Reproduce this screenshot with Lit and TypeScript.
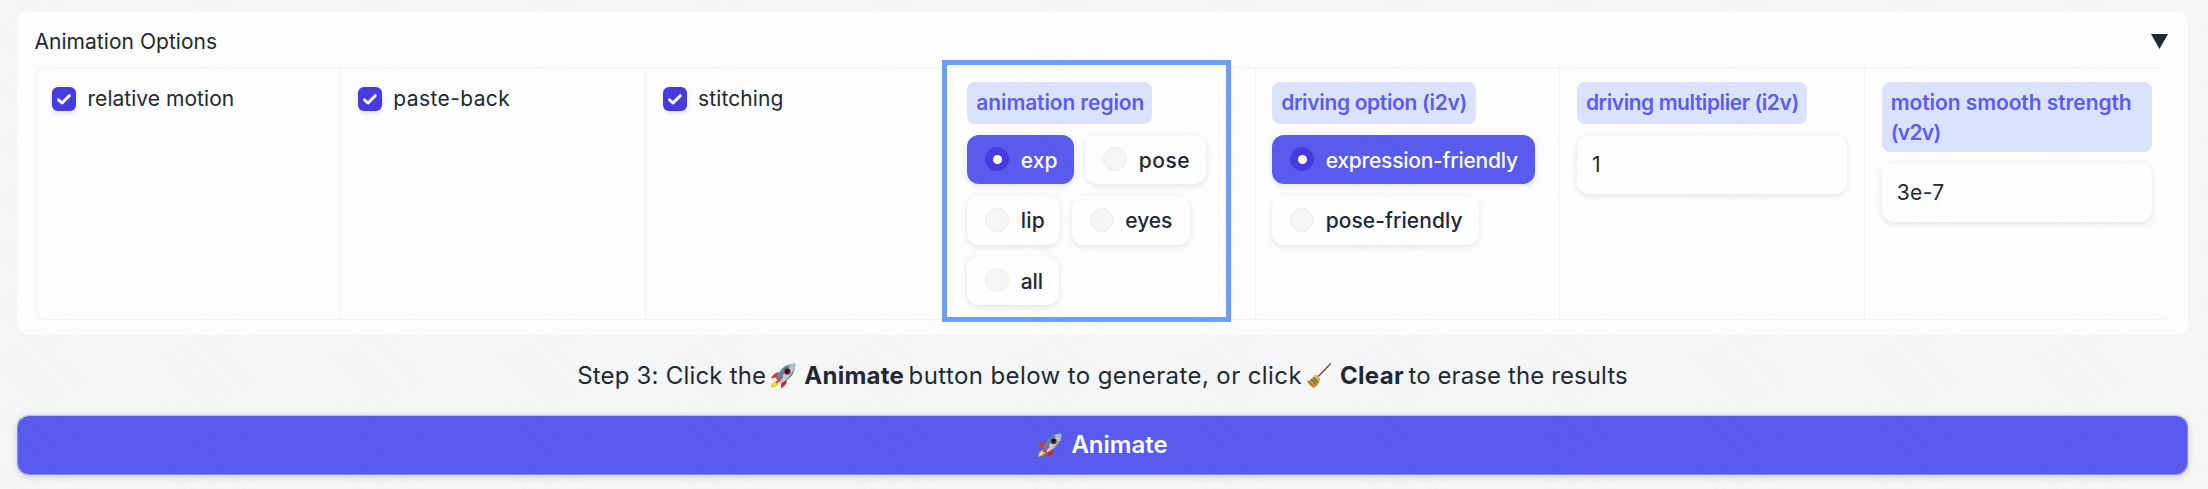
import { LitElement, html, svg, css } from 'lit';
import { customElement } from 'lit/decorators.js';
import { styleMap } from 'lit/directives/style-map.js';

type Run = { text: string; ls: number };
type Option = Run & { width: number; on?: boolean };

const CHECKS: Run[] = [
  { text: 'relative motion', ls: 0.04 },
  { text: 'paste-back', ls: 0.4 },
  { text: 'stitching', ls: 0.1 },
];

const REGION: Option[] = [
  { text: 'exp', ls: 0.05, width: 106.5, on: true },
  { text: 'pose', ls: 0.5, width: 121 },
  { text: 'lip', ls: 0.1, width: 93 },
  { text: 'eyes', ls: -0.1, width: 118 },
  { text: 'all', ls: -0.2, width: 91.5 },
];

const DRIVING: Option[] = [
  { text: 'expression-friendly', ls: -0.24, width: 263, on: true },
  { text: 'pose-friendly', ls: 0.06, width: 206.5 },
];

const run = (r: Run) =>
  html`<span class="run" style=${styleMap({ letterSpacing: `${r.ls}px` })}>${r.text}</span>`;

const rocket = (cls: string) => html`<svg class=${cls} viewBox="0 0 26 26" aria-hidden="true">
  <path d="M5.5 17.5 2.2 20.2 .8 24.8 5.4 23.6 9 20.8z" fill="#f7b718" />
  <path d="M5.5 18.3 3.4 21.2 2.6 23.3 5 22.2 8 19.8z" fill="#ffee58" />
  <path d="M9.6 9.2C5.7 8.8 2.9 11.2 .8 15.6l6-1.2z" fill="#e8361f" />
  <path d="M16.7 16.3c.4 3.9-1.6 6.7-5.9 9.2l.7-6.2z" fill="#d3231a" />
  <path d="M25.2 .8c-6.5-.3-12.1 2.5-15.3 7.6L5.7 15.6l4.8 4.8 7.1-4.2c5-3.3 7.9-9 7.6-15.4z" fill="#4d87b5" />
  <path d="M25.2 .8c-5.3 1.8-10.8 6.4-15.5 18.8l.8.8 7.1-4.2c5-3.3 7.9-9 7.6-15.4z" fill="#bdcbd6" />
  <path d="M25.2 .8c-1 6-3.7 10.7-10.3 17l2.7-1.6c5-3.3 7.9-9 7.6-15.4z" fill="#6e8294" />
  <path d="M25.2 .8c-3-.2-5.6.3-8 1.3 2.4 1 5.200 3.700 6.700 6.800 1-2.500 1.500-5.200 1.300-8.100z" fill="#a9bfd0" />
  <circle cx="17.300" cy="8.400" r="3.300" fill="#8d3630" />
  <circle cx="17.300" cy="8.400" r="2.200" fill="#16161d" />
  <path d="M11.700 12.900 5.400 19.300l1.300 1.300 6.700-6.200z" fill="#e9442a" />
</svg>`;

const broom = html`<svg class="emoji" viewBox="0 0 26 26" aria-hidden="true">
  <path d="M24.300 .9 12.200 13.500" stroke="#765246" stroke-width="1.500" stroke-linecap="round" />
  <path d="M9.100 11.700 13.900 16.200C13.500 20 11.300 23.300 7.600 25 4.500 23.200 2.300 20.900 1 17.700c4-.4 6.500-2.300 8.100-6z" fill="#c49a43" />
  <path d="M9.100 11.700c1.700-.4 4.800 2.300 4.800 4.500l-1 .8-4.500-4.100z" fill="#dcb75d" />
  <path d="M6.700 14.500 11.600 19.300M4.900 16.200 10.200 21.600" stroke="#7b5a29" stroke-width="1.100" />
  <path d="M3.200 18.300 8.100 23.600M2 18.100 6.500 23.500" stroke="#94702f" stroke-width=".7" />
</svg>`;

@customElement('app-root')
export class AppRoot extends LitElement {
  static styles = css`
    :host {
      display: block;
      position: relative;
      height: 489px;
      overflow: hidden;
      box-sizing: border-box;
      padding: 12px 20px 0 17px;
      background: #f5f6f8;
      color: #1f2933;
      font: 400 21px/30px Inter, 'Liberation Sans', sans-serif;
    }
    * { box-sizing: border-box; }
    .run { white-space: nowrap; }
    .panel {
      height: 322.5px;
      padding: 0 18px 0 17.5px;
      border-radius: 12px;
      background: #fdfdfd;
    }
    .head {
      display: flex;
      justify-content: space-between;
      padding: 15px 2px 10px 0;
      height: 55px;
    }
    .arrow { width: 17px; height: 15px; margin-top: 7px; fill: #1f2933; }
    .row {
      display: grid;
      grid-template-columns: repeat(7, 1fr);
      height: 252.5px;
      border: 1px solid #f2f3f4;
      border-right-color: transparent;
      border-radius: 12px;
    }
    .cell { padding: 14px 17px 0 16.5px; border-left: 1px solid #f2f3f4; }
    .cell.first { border-left: 0; }
    .check { display: flex; align-items: center; gap: 11.5px; padding-top: 2px; }
    .box {
      width: 24px;
      height: 24px;
      margin-top: -1px;
      border-radius: 6px;
      background: #463bdf;
      box-shadow: 0 2px 4px rgba(0, 0, 0, .12);
    }
    .label {
      display: inline-block;
      height: 42px;
      padding: 6px 9px;
      border-radius: 8px;
      background: #dbe2fe;
      color: #5b5cf0;
      font-weight: 600;
      vertical-align: top;
    }
    .label.tall { display: block; height: 70px; }
    .options { display: flex; flex-wrap: wrap; gap: 11.500px; margin-top: 11px; }
    .option {
      display: flex;
      align-items: center;
      gap: 11.5px;
      height: 49px;
      padding-left: 18px;
      border-radius: 12px;
      background: #fefefe;
      box-shadow: 0 2px 6px rgba(0, 0, 0, .1);
      font-weight: 450;
    }
    .option .run { padding-top: 2px; }
    .option.on { background: #595bed; color: #fff; }
    .dot {
      display: grid;
      place-items: center;
      width: 24px;
      height: 24px;
      margin-top: -1px;
      border: 1px solid #ebedf0;
      border-radius: 50%;
      background: #f5f6f8;
    }
    .on .dot { border-color: #463bdf; background: #463bdf; }
    .on .dot::after { content: ''; width: 9px; height: 9px; border-radius: 50%; background: #fff; }
    .field {
      height: 58.500px;
      margin-top: 11px;
      padding: 15px 15px 13px;
      border-radius: 12px;
      background: #fefefe;
      box-shadow: 0 2px 6px rgba(0, 0, 0, .1);
    }
    .frame {
      position: absolute;
      left: 942px;
      top: 60px;
      width: 289px;
      height: 262px;
      border: 5px solid #6b9fff;
    }
    .step {
      display: flex;
      justify-content: center;
      align-items: center;
      height: 36px;
      margin-top: 23.500px;
      font-size: 24px;
    }
    .step b { font-weight: 700; }
    .emoji { width: 26px; height: 26px; margin: 0 8px 0 4px; fill: none; }
    .gap { margin-left: 4.500px; }
    .button {
      display: flex;
      justify-content: center;
      align-items: center;
      height: 60px;
      margin-top: 21px;
      border: 1px solid #8587f2;
      border-top-color: #b9bbf4;
      border-radius: 12px;
      background: #595bed;
      background-clip: padding-box;
      box-shadow: 0 2px 7px rgba(0, 0, 0, .15);
      color: #fff;
      font-size: 24px;
      font-weight: 600;
    }
    .lead { width: 25px; height: 25px; margin: 0 9px 0 0; }
    .mark { position: absolute; inset: 0; width: 100%; height: 100%; pointer-events: none; }
    .mark text { font: 12px Inter, sans-serif; letter-spacing: .3px; fill: #000; fill-opacity: .01; }
  `;

  private options(items: Option[]) {
    return html`<div class="options">${items.map(
      (o) => html`<div class="option ${o.on ? 'on' : ''}" style=${styleMap({ width: `${o.width}px` })}>
        <span class="dot"></span>${run(o)}
      </div>`,
    )}</div>`;
  }

  private label(r: Run, width: number) {
    return html`<div class="label" style=${styleMap({ width: `${width}px` })}>${run(r)}</div>`;
  }

  render() {
    return html`
      <section class="panel">
        <div class="head">
          ${run({ text: 'Animation Options', ls: 0.04 })}
          <svg class="arrow" viewBox="0 0 17 15"><path d="M0 0h17L8.500 15z" /></svg>
        </div>
        <div class="row">
          ${CHECKS.map(
            (c, i) => html`<div class="cell ${i === 0 ? 'first' : ''}">
              <div class="check">
                <svg class="box" viewBox="0 0 24 24">
                  <path d="M6.500 12.800 10 16 17.300 8.700" fill="none" stroke="#fff" stroke-width="3" stroke-linecap="round" stroke-linejoin="round" />
                </svg>
                ${run(c)}
              </div>
            </div>`,
          )}
          <div class="cell">${this.label({ text: 'animation region', ls: -0.12 }, 184.5)}${this.options(REGION)}</div>
          <div class="cell">${this.label({ text: 'driving option (i2v)', ls: -0.34 }, 203.5)}${this.options(DRIVING)}</div>
          <div class="cell">
            ${this.label({ text: 'driving multiplier (i2v)', ls: -0.44 }, 230)}
            <div class="field">1</div>
          </div>
          <div class="cell">
            <div class="label tall">
              ${run({ text: 'motion smooth strength', ls: -0.08 })}<br />${run({ text: '(v2v)', ls: -0.7 })}
            </div>
            <div class="field">${run({ text: '3e-7', ls: 0.4 })}</div>
          </div>
        </div>
      </section>
      <div class="frame"></div>
      <div class="step">
        ${run({ text: 'Step 3: Click the', ls: 0.2 })}${rocket('emoji')}<b>${run({ text: 'Animate', ls: 0.25 })}</b>
        <span class="gap">${run({ text: 'button below to generate, or click', ls: 0.4 })}</span>${broom}<b>${run({ text: 'Clear', ls: 0.3 })}</b>
        <span class="gap">${run({ text: 'to erase the results', ls: 0.1 })}</span>
      </div>
      <div class="button">${rocket('lead')}<span>Animate</span></div>
      <svg class="mark" aria-hidden="true">
        <defs>
          <pattern id="stamp" x="161" y="20" width="170.200" height="55" patternUnits="userSpaceOnUse">
            ${[-110, -55, 0].map(
              (y) => svg`<g transform="translate(6 ${y}) rotate(45)">
                <text x="0" y="9">2024/08/19 14:39:37</text>
                <text x="-8" y="-9">zhangdingyun</text>
              </g>`,
            )}
          </pattern>
        </defs>
        <rect width="100%" height="100%" fill="url(#stamp)" />
      </svg>
    `;
  }
}
